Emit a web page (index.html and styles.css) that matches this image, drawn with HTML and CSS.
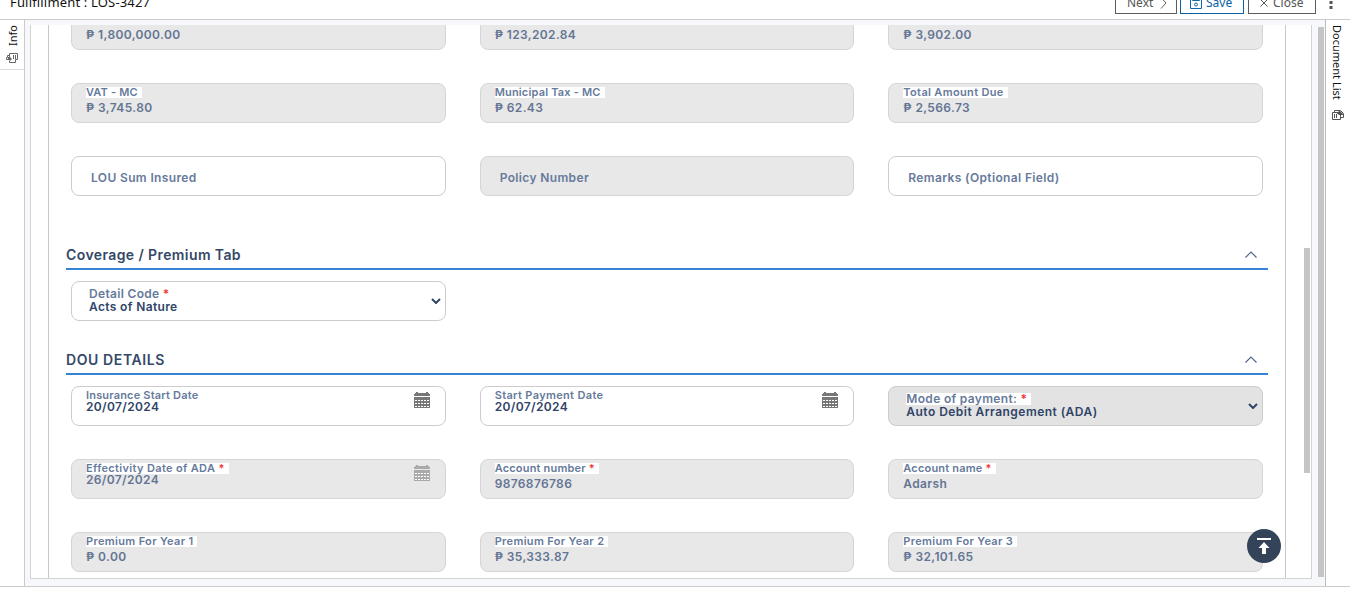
FILE: index.html
```html
<!DOCTYPE html>
<html lang="en">
<head>
<meta charset="utf-8">
<title>Fullfillment : LOS-3427</title>
<link rel="stylesheet" href="styles.css">
</head>
<body>
<svg class="defs" width="0" height="0">
  <symbol id="calendar" viewBox="0 0 16 16">
    <path d="M0 2h1V1h1V0h2v1h8V0h2v1h1v1h1v2H0zM0 5h16v11H0z" fill="currentColor"/>
    <path d="M1 8.500h14M1 11.500h14M1 14.500h14" stroke="#fff" stroke-dasharray="2 1" fill="none"/>
  </symbol>
  <symbol id="up" viewBox="0 0 12 7"><path d="M.5 6.500 6 1l5.500 5.500" fill="none" stroke="#53658a" stroke-width="1.200"/></symbol>
  <symbol id="down" viewBox="0 0 10 6"><path d="M1 1l4 4 4-4" fill="none" stroke="#2f4468" stroke-width="2"/></symbol>
  <symbol id="docs" viewBox="0 0 12 10">
    <path d="M3.500 4V.5h8v6h-2v3h-6v-2M3.500 2.500h-2v2h-1v2h2" fill="none" stroke="#666"/>
    <path d="M2 4h2l2 2-2 2V7H2z" fill="#666"/><path d="M7.500 2v4M9.500 2v4" stroke="#666"/>
  </symbol>
  <symbol id="docs-right" viewBox="0 0 12 10">
    <path d="M.5 2.500h8v7h-8zM2.500 2.500v-2h6l3 3v4h-3" fill="none" stroke="#555"/>
    <path d="M2.500 4v4M4.500 4v4" stroke="#555"/><path d="M7 1h1l3 3v1H7L5 3.500z" fill="#555"/>
  </symbol>
</svg>
<div class="app">
  <header class="topbar">
    <h1 class="title">Fullfillment : LOS-3427</h1>
    <div class="actions">
      <button class="btn next">Next <svg width="7" height="12" viewBox="0 0 7 12"><path d="M1 .5 6 6l-5 5.500" fill="none" stroke="#666"/></svg></button>
      <button class="btn save"><svg width="12" height="12" viewBox="0 0 12 12"><path d="M.5.5h11v11H.5zM2.500.5v3h7v-3" fill="none" stroke="#0a68b0"/><circle cx="6" cy="7.500" r="1.500" fill="none" stroke="#0a68b0"/></svg> Save</button>
      <button class="btn close"><svg width="8" height="8" viewBox="0 0 8 8"><path d="M.5.5l7 7M7.500.5l-7 7" stroke="#555"/></svg> Close</button>
      <svg class="more" width="4" height="14" viewBox="0 0 4 14"><path d="M.5 0h3v3h-3zM.5 5h3v3h-3zM.5 10h3v3h-3z" fill="#555"/></svg>
    </div>
  </header>
  <div class="body">
    <aside class="rail rail-left">
      <div class="rail-tab"><span class="vertical flipped">Info</span><svg width="12" height="10"><use href="#docs"/></svg></div>
    </aside>
    <main class="workspace">
      <div class="panel">
        <div class="form">
          <div class="grid grid-top">
            <div class="field off"><span class="label">&nbsp;</span><span class="value">₱ 1,800,000.00</span></div>
            <div class="field off"><span class="label">&nbsp;</span><span class="value">₱ 123,202.84</span></div>
            <div class="field off"><span class="label">&nbsp;</span><span class="value">₱ 3,902.00</span></div>
            <div class="field off"><span class="label">VAT - MC</span><span class="value">₱ 3,745.80</span></div>
            <div class="field off"><span class="label">Municipal Tax - MC</span><span class="value">₱ 62.43</span></div>
            <div class="field off"><span class="label wide">Total Amount Due</span><span class="value">₱ 2,566.73</span></div>
            <div class="field empty"><span class="placeholder">LOU Sum Insured</span></div>
            <div class="field empty off"><span class="placeholder">Policy Number</span></div>
            <div class="field empty"><span class="placeholder">Remarks (Optional Field)</span></div>
          </div>
          <h2 class="section coverage"><span>Coverage / Premium Tab</span><svg width="12" height="7"><use href="#up"/></svg></h2>
          <div class="grid">
            <div class="field select"><div class="stack"><span class="label">Detail Code <i>*</i></span><span class="value">Acts of Nature</span></div><svg width="10" height="6"><use href="#down"/></svg></div>
          </div>
          <h2 class="section dou"><span>DOU DETAILS</span><svg width="12" height="7"><use href="#up"/></svg></h2>
          <div class="grid">
            <div class="field date"><div class="stack"><span class="label">Insurance Start Date</span><span class="value">20/07/2024</span></div><svg class="cal" width="16" height="16"><use href="#calendar"/></svg></div>
            <div class="field date"><div class="stack"><span class="label wide">Start Payment Date</span><span class="value">20/07/2024</span></div><svg class="cal" width="16" height="16"><use href="#calendar"/></svg></div>
            <div class="field select muted"><div class="stack"><span class="label">Mode of payment: <i>*</i></span><span class="value">Auto Debit Arrangement (ADA)</span></div><svg width="10" height="6"><use href="#down"/></svg></div>
            <div class="field date off"><div class="stack"><span class="label wide">Effectivity Date of ADA <i>*</i></span><span class="value">26/07/2024</span></div><svg class="cal" width="16" height="16"><use href="#calendar"/></svg></div>
            <div class="field off"><span class="label">Account number <i>*</i></span><span class="value">9876876786</span></div>
            <div class="field off"><span class="label">Account name <i>*</i></span><span class="value">Adarsh</span></div>
            <div class="field off"><span class="label wide">Premium For Year 1</span><span class="value">₱ 0.00</span></div>
            <div class="field off"><span class="label wide">Premium For Year 2</span><span class="value">₱ 35,333.87</span></div>
            <div class="field off"><span class="label wide">Premium For Year 3</span><span class="value">₱ 32,101.65</span></div>
          </div>
        </div>
        <div class="scroll-inner"></div>
      </div>
      <div class="scroll-outer"></div>
      <button class="to-top"><svg width="14" height="16" viewBox="0 0 14 16"><path d="M0 0h14v2H0zM7 4l5.500 6H9v6H5v-6H1.500z" fill="#fff"/></svg></button>
    </main>
    <aside class="rail rail-right">
      <span class="vertical">Document List</span><svg width="12" height="10"><use href="#docs-right"/></svg>
    </aside>
  </div>
</div>
</body>
</html>
```
FILE: styles.css
```css
* { box-sizing: border-box; }
body { margin: 0; background: #fff; font-family: "Noto Sans", sans-serif; overflow: hidden; }
.defs { display: block; height: 0; }
svg { display: block; flex: none; }
.app { height: 602px; display: flex; flex-direction: column; }
.topbar { height: 20px; flex: none; border-bottom: 1px solid #ccc; display: flex; justify-content: space-between; overflow: hidden; }
.title { margin: -7px 0 0 10px; font-size: 13px; line-height: 18px; font-weight: 400; letter-spacing: .17px; color: #111; }
.actions { display: flex; gap: 3px; margin-top: -10px; padding-right: 17px; }
.btn { height: 24px; border: 1px solid #5c5c5c; background: #fff; padding: 2px 10px 0 11px; display: flex; align-items: center; gap: 7px; font: 12px/16px "Noto Sans", sans-serif; color: #555; }
.next { width: 62px; }
.save { width: 64px; margin-right: 1px; border-color: #0a5fa5; color: #0a5fa5; padding-left: 9px; gap: 4px; }
.close { width: 68px; gap: 5px; }
.more { margin: 6px 0 0 10px; }
.body { height: 567px; flex: none; display: flex; border-bottom: 1px solid #ccc; }
.rail { width: 25px; flex: none; font-size: 11px; line-height: 16px; color: #111; }
.rail-left { border-right: 1px solid #ccc; }
.rail-tab { height: 50px; border-bottom: 1px solid #ddd; display: flex; flex-direction: column; align-items: center; padding-top: 5px; gap: 7px; }
.vertical { writing-mode: vertical-rl; }
.flipped { transform: rotate(180deg); margin-left: 1px; }
.rail-right { border-left: 1px solid #bbb; display: flex; flex-direction: column; align-items: center; padding: 5px 1px 0 0; gap: 10px; }
.rail-right .vertical { margin-right: 1px; }
.workspace { flex: 1; background: #f7f8fb; padding: 5px 1px 7px 5px; display: flex; gap: 6px; position: relative; }
.panel { width: 1282px; background: #fff; border: 1px solid #d3d3d3; border-top: 0; padding-left: 17px; display: flex; overflow: hidden; }
.form { width: 1238px; border: solid #c8c8c8; border-width: 0 1px; padding: 0 17px; }
.scroll-inner { width: 6px; height: 225px; margin: 223px 0 0 18px; background: #c5c5c5; }
.scroll-outer { width: 6px; height: 550px; margin-top: 2px; background: #c5c5c5; }
.grid { display: grid; grid-template-columns: repeat(3, minmax(0, 1fr)); gap: 33px 34px; padding: 0 5px; }
.grid-top { margin-top: -15px; }
.field { height: 40px; border: 1px solid #ccc; border-radius: 8px; padding: 3px 14px; display: flex; flex-direction: column; align-items: flex-start; gap: 2px; font: 600 12px/15px Inter, sans-serif; letter-spacing: .36px; color: #2f4468; }
.off { background: #e8e8e8; border-color: #d5d5d5; color: #647593; }
.muted { background: #e3e3e3; }
.label { height: 11px; padding-right: 4px; font-size: 11px; line-height: 11px; letter-spacing: .18px; color: #667a9b; white-space: nowrap; }
.label.wide { letter-spacing: .34px; }
.label i { color: #f03a36; font-style: normal; }
.value { line-height: 15px; white-space: nowrap; }
.off .label, .muted .label { background: #fff; }
.grid-top .field:nth-child(-n+3) .label { background: none; }
.empty { padding: 13px 19px; }
.placeholder { color: #667a9b; }
.select, .date { flex-direction: row; justify-content: space-between; }
.stack { display: flex; flex-direction: column; align-items: flex-start; }
.select { padding: 6px 4px 0 17px; align-items: flex-start; }
.select > svg { margin-top: 10px; }
.select .label { height: 12px; line-height: 12px; font-size: 12px; letter-spacing: .32px; }
.select .value { line-height: 13px; }
.muted .value { letter-spacing: .46px; }
.date { padding-right: 15px; }
.date .value { line-height: 12px; letter-spacing: .36px; }
.cal { color: #777; margin-top: 2px; }
.off .cal { color: #aaa; }
.section { height: 27px; border-bottom: 2px solid #3682d7; margin: 0 0 11px; display: flex; justify-content: space-between; align-items: flex-start; padding: 2px 11px 0 0; font: 600 14px/20px Inter, sans-serif; letter-spacing: .4px; color: #344867; }
.section svg { margin-top: 6px; }
.coverage { margin-top: 47px; }
.dou { margin-top: 27px; letter-spacing: .6px; }
.to-top { position: absolute; left: 1222px; top: 509px; width: 34px; height: 34px; border: 0; border-radius: 50%; background: #334358; display: flex; align-items: center; justify-content: center; padding: 0; }
```
